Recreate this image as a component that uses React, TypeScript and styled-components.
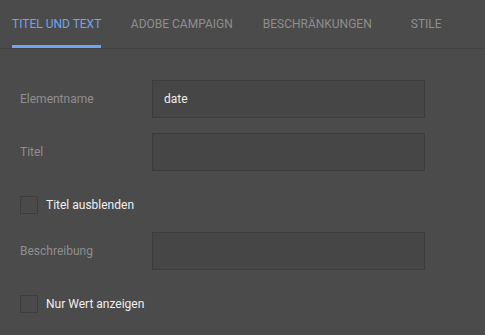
import React from "react";
import styled, { createGlobalStyle } from "styled-components";

const Global = createGlobalStyle`
  html, body { margin: 0; padding: 0; background: #4b4b4b; }
  body { font-family: "Roboto", "Lato", sans-serif; width: 485px; height: 335px; overflow: hidden; }
`;

const Page = styled.div`
  width: 485px;
  height: 335px;
  background: #4b4b4b;
`;

const TabBar = styled.div`
  display: flex;
  height: 48px;
  padding-left: 12px;
  border-bottom: 1px solid #414141;
  box-sizing: content-box;
`;

const Tab = styled.div<{ $active?: boolean; $gap: number }>`
  position: relative;
  display: flex;
  align-items: center;
  height: 48px;
  margin-right: ${(p) => p.$gap}px;
  font-size: 12px;
  color: ${(p) => (p.$active ? "#70a3f3" : "#8e8e8e")};
  white-space: nowrap;
  &::after {
    content: "";
    display: ${(p) => (p.$active ? "block" : "none")};
    position: absolute;
    left: 0;
    right: 0;
    bottom: 0;
    height: 3px;
    background: #70a3f3;
  }
`;

const Form = styled.div`
  display: flex;
  flex-direction: column;
  padding: 31px 0 0 20px;
`;

const Row = styled.div<{ $top: number }>`
  display: flex;
  align-items: center;
  margin-top: ${(p) => p.$top}px;
`;

const Label = styled.div`
  width: 132px;
  font-size: 12px;
  color: #8f8f8f;
`;

const Input = styled.div`
  width: 273px;
  height: 38px;
  box-sizing: border-box;
  background: #464646;
  border: 1px solid #3c3c3c;
  display: flex;
  align-items: center;
  padding-left: 11px;
  font-size: 12px;
  color: #ececec;
`;

const Box = styled.div`
  width: 18px;
  height: 18px;
  box-sizing: border-box;
  border: 1px solid #3c3c3c;
  background: #4a4a4a;
  margin-right: 8px;
`;

const CheckText = styled.div`
  font-size: 12px;
  color: #f0f0f0;
`;

export default function App() {
  return (
    <Page>
      <Global />
      <TabBar>
        <Tab $active $gap={29.5}>TITEL UND TEXT</Tab>
        <Tab $gap={30}>ADOBE CAMPAIGN</Tab>
        <Tab $gap={39}>BESCHRÄNKUNGEN</Tab>
        <Tab $gap={0}>STILE</Tab>
      </TabBar>
      <Form>
        <Row $top={0}>
          <Label>Elementname</Label>
          <Input>date</Input>
        </Row>
        <Row $top={15}>
          <Label>Titel</Label>
          <Input />
        </Row>
        <Row $top={25}>
          <Box />
          <CheckText>Titel ausblenden</CheckText>
        </Row>
        <Row $top={18}>
          <Label>Beschreibung</Label>
          <Input />
        </Row>
        <Row $top={25}>
          <Box />
          <CheckText>Nur Wert anzeigen</CheckText>
        </Row>
      </Form>
    </Page>
  );
}
